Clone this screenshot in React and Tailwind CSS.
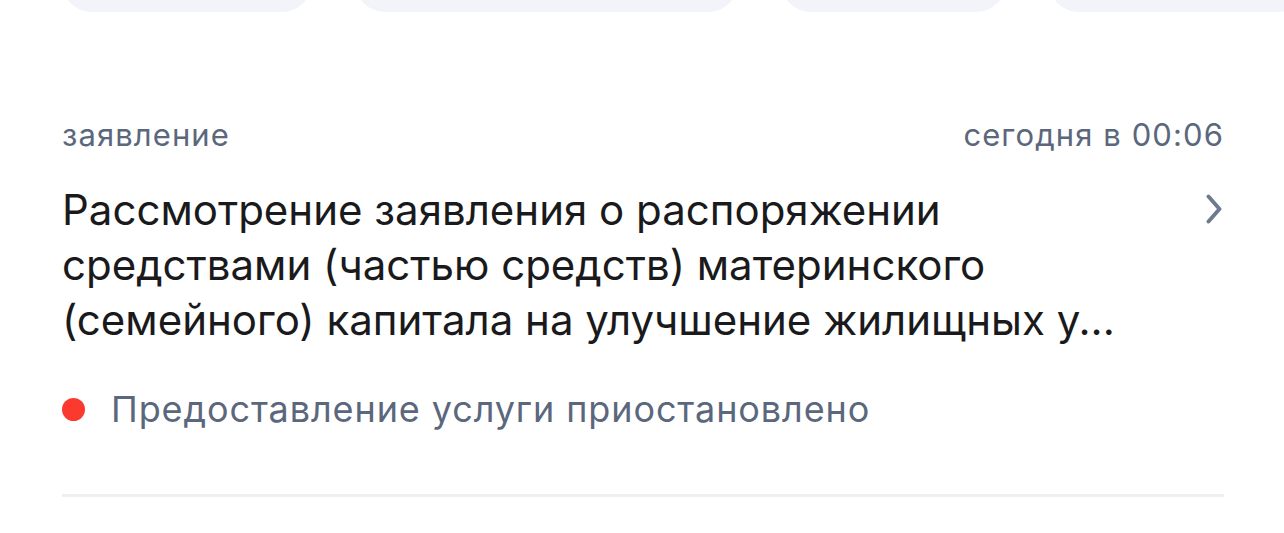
const chips = ["w-[250px]", "w-[383px]", "w-[225px]", "w-[260px]"];

const titleLines = [
  "Рассмотрение заявления о распоряжении",
  "средствами (частью средств) материнского",
  "(семейного) капитала на улучшение жилищных у...",
];

export default function App() {
  return (
    <div className="min-h-screen bg-white font-['Inter',sans-serif] overflow-hidden">
      {/* chips scrolled off the top */}
      <div className="flex h-3 items-end gap-[43px] overflow-hidden pl-[62px]">
        {chips.map((w, i) => (
          <div key={i} className={`${w} h-[60px] shrink-0 rounded-[30px] bg-[#f2f4f9]`} />
        ))}
      </div>

      <div className="pl-[62px] pr-[60px]">
        <div className="mt-[105px] flex items-center justify-between text-[31px] leading-[36px] tracking-[1.1px] text-[#5b677c]">
          <span>заявление</span>
          <span>сегодня в 00:06</span>
        </div>

        <div className="mt-[29px] flex items-start justify-between">
          <div className="text-[42px] leading-[55px] tracking-[0px] text-[#1a1a1c]">
            {titleLines.map((l) => (
              <div key={l} className="whitespace-nowrap">{l}</div>
            ))}
          </div>
          <svg width="16" height="30" viewBox="0 0 16 30" className="mt-[12px] mr-[2px] shrink-0" fill="none">
            <path d="M2.5 2.5 L13.5 15 L2.5 27.5" stroke="#6e7a8e" strokeWidth="3.9" strokeLinecap="round" strokeLinejoin="round" />
          </svg>
        </div>

        <div className="mt-[40px] flex items-center gap-[26px] text-[36px] leading-[44px] tracking-[0.9px] text-[#5b677c]">
          <span className="h-[23px] w-[23px] shrink-0 rounded-full bg-[#fb3a2f]" />
          <span>Предоставление услуги приостановлено</span>
        </div>

        <div className="mt-[63px] h-[3px] bg-[#edeff3]" />
      </div>
    </div>
  );
}
